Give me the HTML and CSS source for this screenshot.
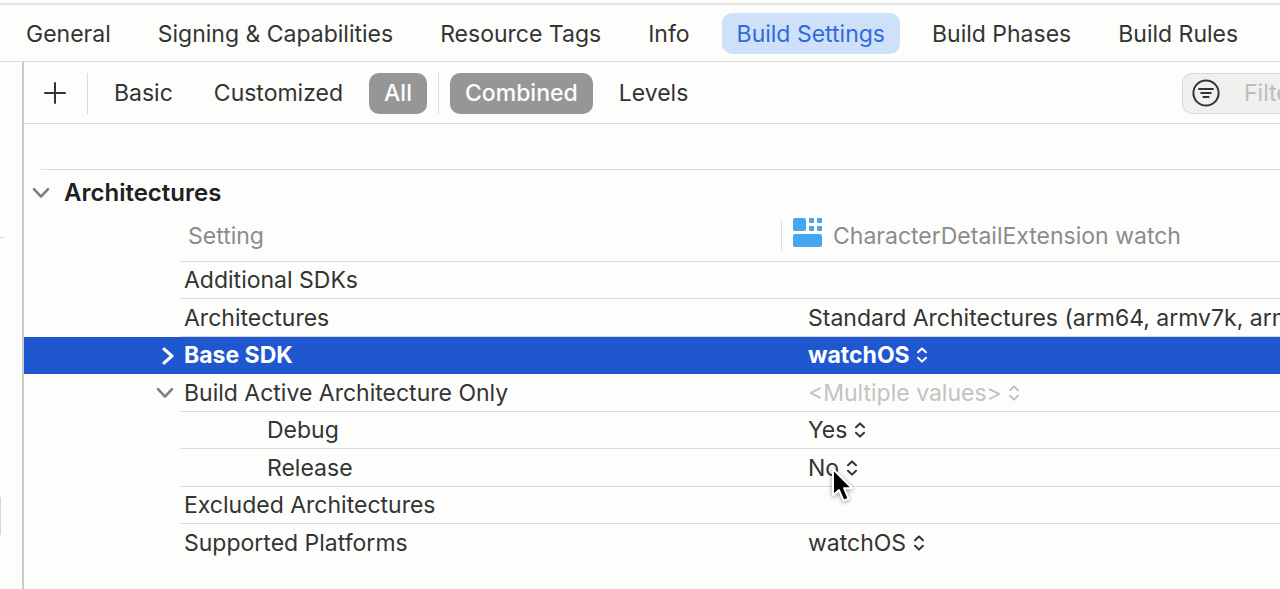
FILE: index.html
```html
<!DOCTYPE html>
<html lang="en">
<head>
<meta charset="utf-8">
<title>Build Settings</title>
<link rel="stylesheet" href="styles.css">
</head>
<body>
<svg class="defs" aria-hidden="true">
  <symbol id="updown" viewBox="0 0 12 18"><path d="M2 6.2 6 2.4l4 3.8M2 11.8l4 3.8 4-3.8"/></symbol>
  <symbol id="down" viewBox="0 0 18 12"><path d="M2 2.2 9 9.6 16 2.2"/></symbol>
  <symbol id="right" viewBox="0 0 12 18"><path d="M2 2l8 7-8 7"/></symbol>
</svg>
<nav class="tabs">
  <button class="pill">General</button>
  <button class="pill">Signing &amp; Capabilities</button>
  <button class="pill">Resource Tags</button>
  <button class="pill">Info</button>
  <button class="pill pill-current" aria-current="page">Build Settings</button>
  <button class="pill">Build Phases</button>
  <button class="pill">Build Rules</button>
</nav>
<div class="workspace">
  <aside class="sidebar"><span class="side-rule"></span><span class="side-handle"></span></aside>
  <main class="editor">
    <div class="toolbar">
      <button class="add" aria-label="Add"><svg class="plus" viewBox="0 0 22 22"><path d="M11 1v20M1 11h20"/></svg></button>
      <span class="divider"></span>
      <button class="pill">Basic</button>
      <button class="pill">Customized</button>
      <button class="pill pill-on" aria-pressed="true">All</button>
      <span class="divider"></span>
      <button class="pill pill-on" aria-pressed="true">Combined</button>
      <button class="pill">Levels</button>
      <label class="filter">
        <svg class="filter-icon" viewBox="0 0 28 28"><circle cx="14" cy="14" r="12.6"/><path d="M7 10h14M9.2 14h9.6M11.4 18h5.2"/></svg>
        <input class="filter-input" type="text" placeholder="Filter" aria-label="Filter">
      </label>
    </div>
    <section class="group">
      <h2 class="group-title"><button class="toggle" aria-label="Collapse Architectures"><svg class="chev-down"><use href="#down"/></svg></button>Architectures</h2>
      <table class="settings">
        <colgroup><col class="col-gutter"><col class="col-name"><col></colgroup>
        <thead>
          <tr><td class="gutter"></td><th class="head-name">Setting</th>
          <th><span class="target"><svg class="target-icon" viewBox="0 0 29 29"><rect x="0" y="0" width="13" height="13" rx="2"/><rect x="16" y="0" width="5" height="5" rx="1"/><rect x="24" y="0" width="5" height="5" rx="1"/><rect x="16" y="8" width="5" height="5" rx="1"/><rect x="24" y="8" width="5" height="5" rx="1"/><rect x="0" y="16" width="29" height="13" rx="2"/></svg>CharacterDetailExtension watch</span></th></tr>
        </thead>
        <tbody>
          <tr><td class="gutter"></td><td>Additional SDKs</td><td></td></tr>
          <tr><td class="gutter"></td><td>Architectures</td><td class="value">Standard Architectures (arm64, armv7k, arm64_32)</td></tr>
          <tr class="selected"><td class="gutter"><button class="toggle" aria-label="Expand Base SDK"><svg class="chev-right"><use href="#right"/></svg></button></td><td>Base SDK</td><td class="value"><label class="popup"><select aria-label="Base SDK"><option>watchOS</option></select><svg class="updown"><use href="#updown"/></svg></label></td></tr>
          <tr><td class="gutter"><button class="toggle" aria-label="Collapse Build Active Architecture Only"><svg class="chev-down"><use href="#down"/></svg></button></td><td>Build Active Architecture Only</td><td class="value"><label class="popup mixed"><select aria-label="Build Active Architecture Only"><option>&lt;Multiple values&gt;</option></select><svg class="updown"><use href="#updown"/></svg></label></td></tr>
          <tr><td class="gutter"></td><td class="child">Debug</td><td class="value"><label class="popup"><select aria-label="Debug"><option>Yes</option></select><svg class="updown"><use href="#updown"/></svg></label></td></tr>
          <tr><td class="gutter"></td><td class="child">Release</td><td class="value"><label class="popup"><select aria-label="Release"><option>No</option></select><svg class="updown"><use href="#updown"/></svg></label></td></tr>
          <tr><td class="gutter"></td><td>Excluded Architectures</td><td></td></tr>
          <tr class="last"><td class="gutter"></td><td>Supported Platforms</td><td class="value"><label class="popup"><select aria-label="Supported Platforms"><option>watchOS</option></select><svg class="updown"><use href="#updown"/></svg></label></td></tr>
        </tbody>
      </table>
    </section>
  </main>
</div>
<svg class="cursor" viewBox="0 0 22 36" aria-hidden="true"><path d="M2 2v26.5l6-5.4 4.6 10.6 5-2.1-4.5-10.4h8z"/></svg>
</body>
</html>
```

FILE: styles.css
```css
* { box-sizing: border-box; }

body {
  margin: 0;
  min-height: 100vh;
  display: flex;
  flex-direction: column;
  overflow: hidden;
  background: #fdfefc;
  color: #333433;
  font: 23px/28px Inter, "Liberation Sans", sans-serif;
}

button, input, select {
  font: inherit;
  color: inherit;
  border: 0;
  padding: 0;
  margin: 0;
  background: none;
}

svg {
  display: block;
  flex: none;
  fill: none;
  stroke: currentColor;
  stroke-width: 2;
  stroke-linecap: round;
  stroke-linejoin: round;
}

.defs { position: absolute; width: 0; height: 0; }

.tabs {
  display: flex;
  align-items: center;
  gap: 17px;
  height: 59px;
  margin-top: 3px;
  padding: 1px 0 0 11px;
  border-top: 2px solid #e6e7e5;
  border-bottom: 1px solid #dcdddb;
}

.pill {
  flex: none;
  height: 41px;
  padding: 0 15px;
  border-radius: 10px;
  white-space: nowrap;
}

.pill-current { background: #cfe1f8; color: #2e6be0; }
.pill-on { background: #959695; color: #fdfefc; font-weight: 500; }

.workspace { display: flex; flex: 1; }

.sidebar {
  flex: none;
  width: 24px;
  border-right: 2px solid #c9cbc9;
}

.side-rule {
  display: block;
  width: 5px;
  height: 1px;
  margin-top: 175px;
  background: #dcdddb;
}

.side-handle {
  display: block;
  width: 1px;
  height: 38px;
  margin-top: 259px;
  background: #d5d6d4;
}

.editor { flex: 1; min-width: 0; }

.toolbar {
  display: flex;
  align-items: center;
  gap: 11px;
  height: 62px;
  padding: 1px 0 0 9px;
  border-bottom: 1px solid #dcdddb;
}

.add {
  display: grid;
  place-items: center;
  width: 43px;
  height: 41px;
}

.plus { width: 22px; height: 22px; }

.divider { width: 1px; height: 41px; background: #dcdddb; }

.filter {
  display: flex;
  align-items: center;
  gap: 24px;
  width: 98px;
  height: 41px;
  margin-left: auto;
  padding-left: 9px;
  border: 1px solid #d9dad8;
  border-right: 0;
  border-radius: 10px 0 0 10px;
  background: #f0f1ef;
}

.filter-icon { width: 28px; height: 28px; }
.filter-input { flex: 1; min-width: 0; width: 0; outline: 0; }
.filter-input::placeholder { color: #bcbdbb; opacity: 1; }

.group {
  margin: 45px 0 0 17px;
  border-top: 1px solid #dcdddb;
}

.group-title {
  display: flex;
  align-items: center;
  gap: 14px;
  height: 46px;
  margin: 0 0 0 -9px;
  font-size: 24px;
  font-weight: 600;
  color: #1f201f;
}

.toggle { color: #7e7f7e; }
.chev-down { width: 18px; height: 12px; stroke-width: 2.6; }
.chev-right { width: 12px; height: 18px; stroke-width: 3; }

.settings {
  width: calc(100% + 17px);
  margin-left: -17px;
  table-layout: fixed;
  border-collapse: separate;
  border-spacing: 0;
}

.col-gutter { width: 156px; }
.col-name { width: 601px; }

.settings th, .settings td {
  height: 37px;
  padding: 0 0 0 4px;
  border-bottom: 1px solid #dcdddb;
  text-align: left;
  font-weight: inherit;
  white-space: nowrap;
  overflow: hidden;
}

.settings tr:nth-child(even) td { height: 38px; }

.settings thead th {
  height: 46px;
  padding: 0 0 6px;
  color: #8b8c8b;
}

.settings .head-name { padding-left: 8px; }

.target {
  display: flex;
  align-items: center;
  gap: 11px;
  height: 29px;
  padding-left: 11px;
  border-left: 1px solid #dcdddb;
}

.target-icon { width: 29px; height: 29px; margin-bottom: 6px; fill: #46a5f0; stroke: none; }

.settings .gutter {
  padding: 0 6px 0 0;
  border-bottom: 0;
}

.gutter .toggle { display: block; margin-left: auto; }
.settings .child { padding-left: 87px; }
.settings .value { padding-left: 27px; }
.settings .last td { border-bottom: 0; }

.selected { background: #1f57d0; color: #fff; font-weight: 700; }
.settings .selected td { border-bottom-color: #1f57d0; }
.selected .toggle { color: #fff; }

.popup { display: flex; align-items: center; gap: 6px; }
.popup select { appearance: none; outline: 0; height: 28px; }
.updown { width: 12px; height: 18px; }
.mixed { color: #c2c3c1; }

.cursor {
  position: absolute;
  left: 831px;
  top: 467px;
  width: 22px;
  height: 36px;
  fill: #000;
  stroke: #fff;
  filter: drop-shadow(0 1px 2px #0006);
}
```
